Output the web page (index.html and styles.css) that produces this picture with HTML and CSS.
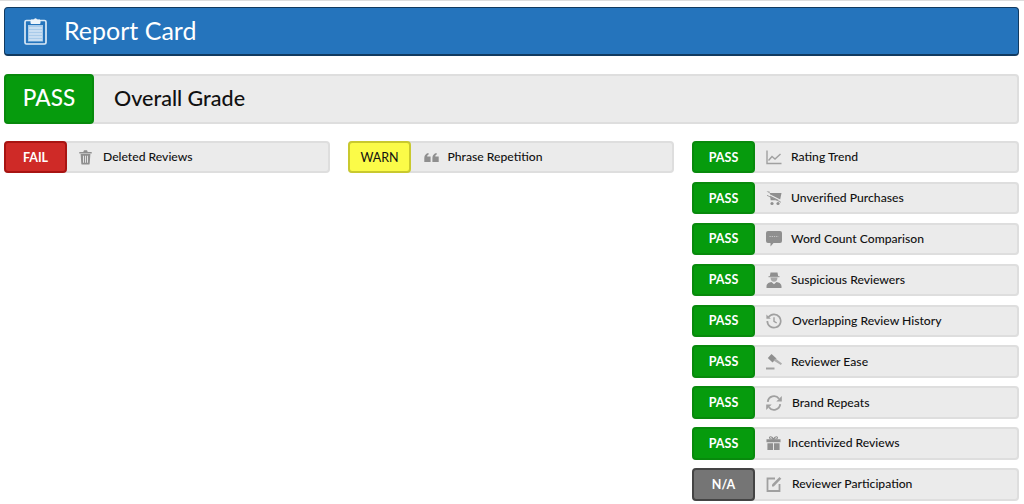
FILE: index.html
```html
<!DOCTYPE html>
<html lang="en">
<head>
<meta charset="utf-8">
<title>Report Card</title>
<link rel="stylesheet" href="styles.css">
</head>
<body>
<div class="page">
  <header class="banner">
    <svg class="banner-icon" viewBox="0 0 24 28" width="24" height="28">
      <rect x="1" y="3.500" width="21" height="23.500" rx="1.500" fill="none" stroke="#dbe9f6" stroke-width="1.700"/>
      <rect x="4" y="8" width="15" height="16.500" fill="#a9cbea"/>
      <path d="M5 11h13M5 14h13M5 17h13M5 20h13M5 23h13" stroke="#e8f1fa" stroke-width="1"/>
      <path d="M7 6.500V3h2.800a1.800 1.800 0 0 1 3.400 0H16v3.500z" fill="#eef5fb" stroke="#eef5fb"/>
    </svg>
    <h1 class="banner-title">Report Card</h1>
  </header>

  <section class="overall">
    <div class="grade grade-pass overall-grade">PASS</div>
    <div class="overall-label">Overall Grade</div>
  </section>

  <section class="columns">
    <div class="column">
      <div class="item">
        <div class="grade grade-fail">FAIL</div>
        <div class="item-body">
          <svg class="icon icon-trash" viewBox="0 0 16 18"><path d="M1 3.500h14v1.500H1zM5.500 3.500l.8-2h3.400l.8 2z" fill="#8f8f8f"/><path fill-rule="evenodd" d="M2.500 5.500h11l-.8 11a1.200 1.200 0 0 1-1.200 1h-7a1.200 1.200 0 0 1-1.200-1zM5.300 7.500v8h1v-8zM7.500 7.500v8h1v-8zM9.700 7.500v8h1v-8z" fill="#8f8f8f"/></svg>
          <span class="item-text">Deleted Reviews</span>
        </div>
      </div>
    </div>

    <div class="column">
      <div class="item">
        <div class="grade grade-warn">WARN</div>
        <div class="item-body">
          <svg class="icon icon-quote" viewBox="0 0 16 10"><path d="M0 10V5.500C0 2.500 2 .5 4.500 0l.5 1.500C3.800 2 3.200 3 3.200 4H7v6zM9 10V5.500C9 2.500 11 .5 13.500 0l.5 1.500C12.800 2 12.200 3 12.200 4H16v6z" fill="#8f8f8f"/></svg>
          <span class="item-text">Phrase Repetition</span>
        </div>
      </div>
    </div>

    <div class="column">
      <div class="item">
        <div class="grade grade-pass">PASS</div>
        <div class="item-body">
          <svg class="icon" viewBox="0 0 16 16"><path d="M1 1.500V14.500H15.500" fill="none" stroke="#a0a0a0" stroke-width="1.400"/><path d="M2.500 11.500 6 7.500l3 2.500 5.500-5" fill="none" stroke="#a0a0a0" stroke-width="1.400"/></svg>
          <span class="item-text">Rating Trend</span>
        </div>
      </div>
      <div class="item">
        <div class="grade grade-pass">PASS</div>
        <div class="item-body">
          <svg class="icon" viewBox="0 0 16 16"><path d="M.5 1.500h3l1.200 8.800H14l1.500-7.300H3.500z" fill="#8f8f8f"/><circle cx="6" cy="13.500" r="1.600" fill="#8f8f8f"/><circle cx="12" cy="13.500" r="1.600" fill="#8f8f8f"/><path d="M1 3.500 15 10.500" stroke="#ebebeb" stroke-width="1.300"/><path d="M1 5.300 15 12.300" stroke="#9a9a9a" stroke-width=".9"/></svg>
          <span class="item-text">Unverified Purchases</span>
        </div>
      </div>
      <div class="item">
        <div class="grade grade-pass">PASS</div>
        <div class="item-body">
          <svg class="icon" viewBox="0 0 16 16"><path d="M2 0h12a2 2 0 0 1 2 2v8a2 2 0 0 1-2 2H7.500L4.500 15.500V12H2a2 2 0 0 1-2-2V2A2 2 0 0 1 2 0z" fill="#8f8f8f"/><path d="M3.500 5.500h9" stroke="#c4c4c4" stroke-width="1" stroke-dasharray="1.300 .9"/></svg>
          <span class="item-text">Word Count Comparison</span>
        </div>
      </div>
      <div class="item">
        <div class="grade grade-pass">PASS</div>
        <div class="item-body">
          <svg class="icon" viewBox="0 0 16 16"><path d="M4.500 .5h7l.7 3.700H3.800z" fill="#8f8f8f"/><path d="M2.500 4.200h11V5.200h-11z" fill="#8f8f8f"/><path d="M4.500 5.500h7c0 2.800-1.500 4.200-3.500 4.200S4.500 8.300 4.500 5.500z" fill="#a8a8a8"/><path d="M.5 16v-1.800c0-2.500 2.500-4 5-4.300L8 12.300l2.500-2.400c2.500.3 5 1.800 5 4.300V16z" fill="#8f8f8f"/></svg>
          <span class="item-text">Suspicious Reviewers</span>
        </div>
      </div>
      <div class="item">
        <div class="grade grade-pass">PASS</div>
        <div class="item-body wide">
          <svg class="icon" viewBox="0 0 16 16"><path d="M2.400 4.300A6.700 6.700 0 1 1 1.300 8" fill="none" stroke="#a0a0a0" stroke-width="1.700"/><path d="M.4 1.400v4.400h4.400z" fill="#a0a0a0"/><path d="M8 4.300V8.300l2.700 1.700" fill="none" stroke="#a0a0a0" stroke-width="1.400"/></svg>
          <span class="item-text">Overlapping Review History</span>
        </div>
      </div>
      <div class="item">
        <div class="grade grade-pass">PASS</div>
        <div class="item-body">
          <svg class="icon" viewBox="0 0 16 16"><path d="M5.500 0 10.500 4.500 6.500 8.500 1.800 4z" fill="#8f8f8f"/><path d="M7.500 6.500 9.500 4.500l6.500 5-1.200 1.500z" fill="#adadad"/><path d="M0 13.500h8.500V15.500H0z" fill="#a0a0a0"/></svg>
          <span class="item-text">Reviewer Ease</span>
        </div>
      </div>
      <div class="item">
        <div class="grade grade-pass">PASS</div>
        <div class="item-body wide">
          <svg class="icon" viewBox="0 0 16 16"><path d="M1.800 6.800A6.200 6.200 0 0 1 13 3.800" fill="none" stroke="#a0a0a0" stroke-width="1.900"/><path d="M15.800 1v5.500h-5.500z" fill="#a0a0a0"/><path d="M14.200 9.200A6.200 6.200 0 0 1 3 12.200" fill="none" stroke="#a0a0a0" stroke-width="1.900"/><path d="M.2 15V9.500h5.500z" fill="#a0a0a0"/></svg>
          <span class="item-text">Brand Repeats</span>
        </div>
      </div>
      <div class="item">
        <div class="grade grade-pass">PASS</div>
        <div class="item-body narrow">
          <svg class="icon icon-gift" viewBox="0 0 16 16"><path d="M.5 4h15v3.300H.5zM1.500 8.300h6V15.500h-6zM8.500 8.300h6V15.500h-6z" fill="#8f8f8f"/><path d="M8 4C6.500.5 3 .8 3.800 2.800 4.200 3.700 6 4 8 4c2 0 3.800-.3 4.200-1.200C13 .8 9.500.5 8 4z" fill="none" stroke="#8f8f8f" stroke-width="1.100"/></svg>
          <span class="item-text">Incentivized Reviews</span>
        </div>
      </div>
      <div class="item">
        <div class="grade grade-na">N/A</div>
        <div class="item-body wide">
          <svg class="icon" viewBox="0 0 16 16"><path d="M9 2.500H1.500v12.500h12V8" fill="none" stroke="#a0a0a0" stroke-width="1.800"/><path d="M6 10.500V8.500L13.500 1l1.800 1.800L7.800 10.500z" fill="#a0a0a0"/></svg>
          <span class="item-text">Reviewer Participation</span>
        </div>
      </div>
    </div>
  </section>
</div>
</body>
</html>
```

FILE: styles.css
```css
* {
  box-sizing: border-box;
}

html,
body {
  margin: 0;
  background: #fff;
}

body {
  font-family: "Lato", "Noto Sans", sans-serif;
  color: #111;
  overflow: hidden;
}

.page {
  border-top: 1px solid #ddd;
  padding: 6px 5px 0 4px;
  height: 504px;
}

.banner {
  display: flex;
  align-items: center;
  height: 49px;
  padding-left: 19px;
  background: #2574bc;
  border: 1.500px solid #113a60;
  border-bottom-width: 2px;
  border-radius: 4px;
}

.banner-icon {
  flex: none;
}

.banner-title {
  margin: 0 0 0 16px;
  padding-bottom: 2px;
  font-size: 25px;
  font-weight: 400;
  color: #fff;
}

.overall {
  display: flex;
  height: 50px;
  margin-top: 18px;
  background: #ebebeb;
  border: 2px solid #dedede;
  border-left: 0;
  border-radius: 4px;
}

.grade {
  display: flex;
  flex: none;
  align-items: center;
  justify-content: center;
  width: 63px;
  margin: -2px 0;
  border: 2px solid;
  border-radius: 4px;
  font-size: 12.500px;
  font-weight: 700;
}

.grade-pass {
  background: #069b0d;
  border-color: #078a0c;
  color: #fff;
}

.grade-fail {
  background: #cf2a27;
  border-color: #a81412;
  color: #fff;
}

.grade-warn {
  background: #fbfb48;
  border-color: #c9c92e;
  color: #111;
  font-weight: 400;
}

.grade-na {
  background: #757575;
  border-color: #444;
  color: #fff;
}

.overall-grade {
  width: 90px;
  padding-bottom: 3px;
  font-size: 22.500px;
  font-weight: 500;
}

.overall-label {
  align-self: center;
  margin-left: 20px;
  padding-bottom: 2px;
  font-size: 21.500px;
  font-weight: 500;
}

.columns {
  display: grid;
  grid-template-columns: 1fr 1fr 327px;
  gap: 18px;
  margin-top: 17px;
}

.column {
  display: flex;
  flex-direction: column;
  gap: 8.500px;
}

.item {
  display: flex;
  height: 32.400px;
  background: #ebebeb;
  border: 2px solid #dedede;
  border-left: 0;
  border-radius: 4px;
}

.item-body {
  display: flex;
  align-items: center;
  padding-left: 11px;
  min-width: 0;
}

.icon {
  flex: none;
  width: 16px;
  height: 16px;
}

.icon-trash {
  width: 15px;
}

.icon-quote {
  width: 15px;
  height: 9px;
  margin-left: 2px;
}

.icon-gift {
  width: 15px;
}

.item-text {
  margin-left: 9px;
  padding-bottom: 1px;
  font-size: 12.150px;
  font-weight: 500;
}

.icon-trash + .item-text {
  margin-left: 10px;
}

.icon-quote + .item-text {
  margin-left: 8.500px;
}

.wide .item-text {
  margin-left: 10px;
}

.narrow .item-text {
  margin-left: 7px;
}
```
